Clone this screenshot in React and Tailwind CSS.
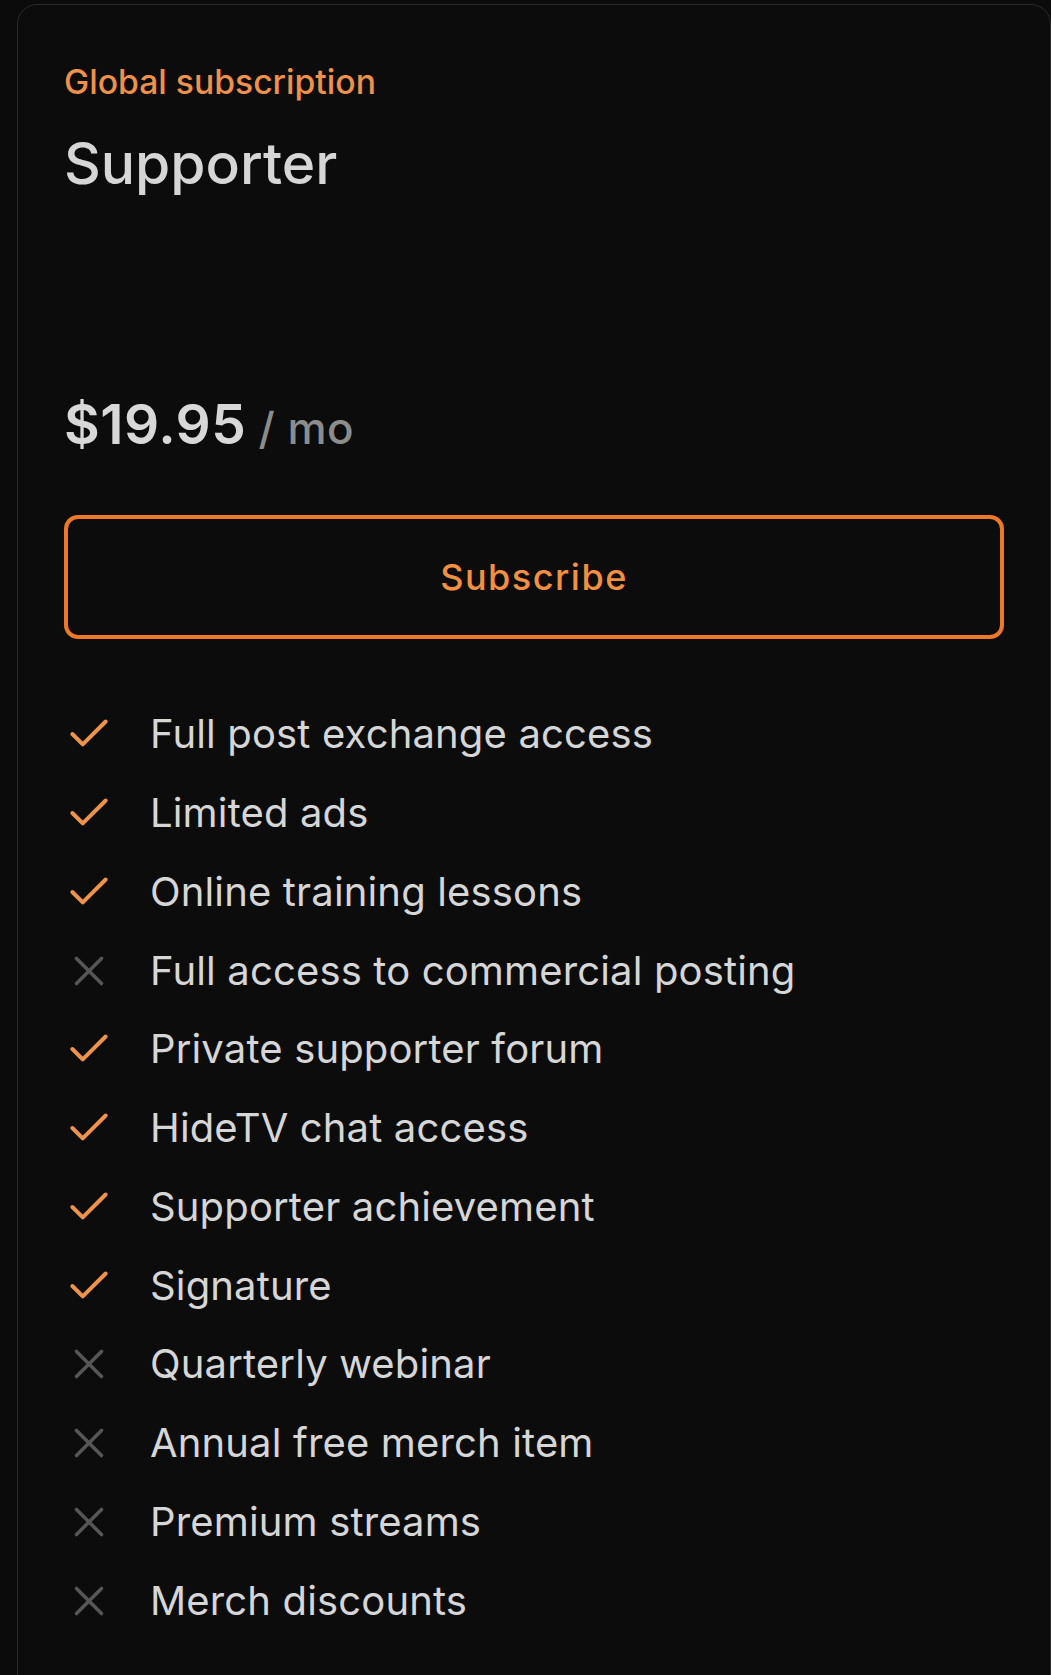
import React from "react";
import { Check, X } from "lucide-react";

const features = [
  { label: "Full post exchange access", included: true },
  { label: "Limited ads", included: true },
  { label: "Online training lessons", included: true },
  { label: "Full access to commercial posting", included: false },
  { label: "Private supporter forum", included: true },
  { label: "HideTV chat access", included: true },
  { label: "Supporter achievement", included: true },
  { label: "Signature", included: true },
  { label: "Quarterly webinar", included: false },
  { label: "Annual free merch item", included: false },
  { label: "Premium streams", included: false },
  { label: "Merch discounts", included: false },
];

const App = () => {
  return (
    <div className="min-h-screen bg-[#0b0b0b] pt-[4px] pl-[17px] overflow-hidden font-['Inter',sans-serif]">
      <div className="w-[1034px] min-h-[1700px] bg-[#0c0c0c] border border-[#2a2a2a] rounded-[20px] pt-[57px] pl-[46px] pr-[45px]">
        {/* Plan header */}
        <p className="text-[33.7px] leading-[40px] text-[#ee914a] font-medium">
          Global subscription
        </p>
        <h2 className="mt-[30px] text-[57px] leading-[64px] text-[#d6d6d6] font-medium">
          Supporter
        </h2>

        {/* Price */}
        <div className="mt-[198px] flex items-baseline gap-[12px] h-[60px]">
          <span className="text-[55px] leading-[60px] font-semibold text-[#d8d8d8] tracking-[0.5px]">
            $19.95
          </span>
          <span className="text-[44px] leading-[60px] text-[#8c8c8c] font-medium tracking-[0.5px]">
            / mo
          </span>
        </div>

        {/* Subscribe button */}
        <button className="mt-[61px] w-[940px] h-[124px] border-4 border-[#ee782a] rounded-[14px] text-[36px] tracking-[1.5px] font-medium text-[#f29040] flex items-center justify-center">
          Subscribe
        </button>

        {/* Features */}
        <ul className="mt-[56px] flex flex-col">
          {features.map((f) => (
            <li key={f.label} className="h-[78.75px] flex items-center">
              {f.included ? (
                <Check size={50} strokeWidth={1.9} className="text-[#f0934a] shrink-0" />
              ) : (
                <X size={50} strokeWidth={1.7} className="text-[#565656] shrink-0" />
              )}
              <span className="ml-[36px] text-[40px] leading-[48px] tracking-[0.15px] text-[#d6d6d6]">
                {f.label}
              </span>
            </li>
          ))}
        </ul>
      </div>
    </div>
  );
};

export default App;
